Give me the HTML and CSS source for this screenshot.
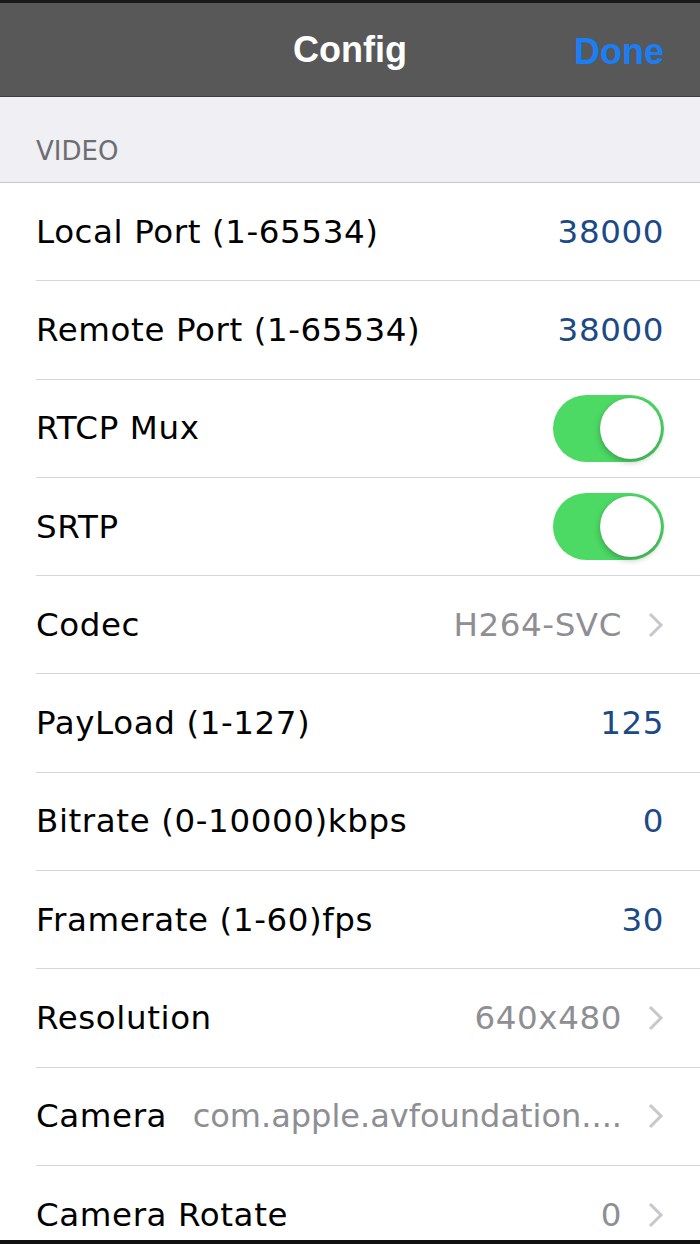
FILE: index.html
```html
<!DOCTYPE html>
<html>
<head>
<meta charset="utf-8">
<link rel="stylesheet" href="styles.css">
</head>
<body>
<div class="screen">
  <header class="navbar">
    <div class="nav-title">Config</div>
    <div class="nav-done">Done</div>
  </header>
  <div class="section-header">VIDEO</div>
  <ul class="list">
    <li class="row"><span class="label">Local Port (1-65534)</span><span class="value num">38000</span></li>
    <li class="row"><span class="label">Remote Port (1-65534)</span><span class="value num">38000</span></li>
    <li class="row"><span class="label">RTCP Mux</span><span class="switch on"><span class="knob"></span></span></li>
    <li class="row"><span class="label">SRTP</span><span class="switch on"><span class="knob"></span></span></li>
    <li class="row"><span class="label">Codec</span><span class="value gray">H264-SVC</span><svg class="chev" viewBox="0 0 16 26"><path d="M2 2 L13 13 L2 24" fill="none" stroke="#c7c7cc" stroke-width="3"/></svg></li>
    <li class="row"><span class="label">PayLoad (1-127)</span><span class="value num">125</span></li>
    <li class="row"><span class="label">Bitrate (0-10000)kbps</span><span class="value num">0</span></li>
    <li class="row"><span class="label">Framerate (1-60)fps</span><span class="value num">30</span></li>
    <li class="row"><span class="label">Resolution</span><span class="value gray">640x480</span><svg class="chev" viewBox="0 0 16 26"><path d="M2 2 L13 13 L2 24" fill="none" stroke="#c7c7cc" stroke-width="3"/></svg></li>
    <li class="row"><span class="label">Camera</span><span class="value gray cam">com.apple.avfoundation....</span><svg class="chev" viewBox="0 0 16 26"><path d="M2 2 L13 13 L2 24" fill="none" stroke="#c7c7cc" stroke-width="3"/></svg></li>
    <li class="row"><span class="label">Camera Rotate</span><span class="value gray">0</span><svg class="chev" viewBox="0 0 16 26"><path d="M2 2 L13 13 L2 24" fill="none" stroke="#c7c7cc" stroke-width="3"/></svg></li>
  </ul>
</div>
</body>
</html>
```
FILE: styles.css
```css
* { box-sizing: border-box; }
html, body { margin: 0; padding: 0; }
body {
  width: 700px;
  height: 1244px;
  overflow: hidden;
  background: #efeff4;
  font-family: "DejaVu Sans", "Liberation Sans", sans-serif;
  border-bottom: 4px solid #111;
}
.screen {
  width: 700px;
  height: 1240px;
  overflow: hidden;
  background: #fff;
}
.navbar {
  height: 97px;
  background: #585858;
  border-top: 3px solid #1a1a1a;
  display: flex;
  align-items: center;
  justify-content: center;
  position: relative;
  border-bottom: 1px solid #3e3e3e;
  font-family: "Liberation Sans", Arial, sans-serif;
}
.nav-title {
  color: #fff;
  font-size: 36px;
  font-weight: bold;
}
.nav-done {
  position: absolute;
  right: 36px;
  top: 28px;
  color: #1a7ef5;
  font-size: 36px;
  font-weight: bold;
}
.section-header {
  height: 86px;
  background: #efeff4;
  color: #6d6d72;
  font-size: 26px;
  padding: 39px 0 0 36px;
  border-bottom: 1px solid #c8c7cc;
}
.list {
  list-style: none;
  margin: 0;
  padding: 0 0 0 36px;
  background: #fff;
}
.row {
  height: 98.3px;
  display: flex;
  align-items: center;
  padding-right: 36px;
  border-bottom: 1.5px solid #d6d6da;
  font-size: 32.5px;
  letter-spacing: 0.6px;
  color: #000;
  white-space: nowrap;
}
.label { flex: 0 0 auto; }
.value {
  margin-left: auto;
}
.value.num { color: #1c4a87; }
.value.gray { color: #8e8e93; }
.value.cam {
  letter-spacing: 0;
  font-size: 32px;
}
.chev {
  width: 16px;
  height: 26px;
  margin-left: 26px;
  flex: 0 0 auto;
}
.switch {
  margin-left: auto;
  width: 111px;
  height: 67px;
  border-radius: 34px;
  background: #4cd964;
  position: relative;
  display: flex;
  align-items: center;
  justify-content: flex-end;
  padding-right: 3px;
}
.knob {
  width: 61px;
  height: 61px;
  border-radius: 50%;
  background: #fff;
  box-shadow: 0 3px 6px rgba(0,0,0,0.25), 0 0 1px rgba(0,0,0,0.2);
}
```
